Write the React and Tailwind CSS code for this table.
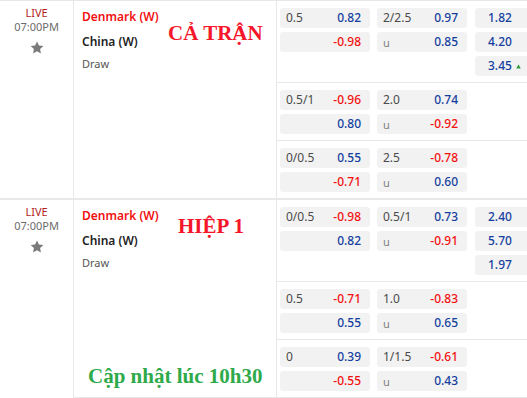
import React from "react";

const BLUE = "text-[#143f9e]";
const RED = "text-[#f21010]";

function Star() {
  return (
    <svg width="14" height="13" viewBox="0 0 24 23" className="mx-auto">
      <path d="M12 0.8l3.4 7.1 7.8 1-5.7 5.4 1.4 7.7L12 18.3l-6.9 3.7 1.4-7.7L0.8 8.9l7.8-1z" fill="#7a7a7a" />
    </svg>
  );
}

function Box({ label, value, color, small }) {
  return (
    <div className="h-[20px] rounded-[3px] bg-[#f2f2f2] flex items-center justify-between pl-[6px] pr-[9px] text-[12px] leading-none">
      <span className={small ? "text-[11px] text-[#808080]" : "text-[#4a4a4a]"}>{label}</span>
      {value !== undefined && <span className={"font-medium " + (color === "b" ? BLUE : RED)}>{value}</span>}
    </div>
  );
}

function Empty() {
  return <div className="h-[20px]" />;
}

function X12({ value, up }) {
  return (
    <div className="h-[20px] rounded-[3px] bg-[#f2f2f2] flex items-center pl-[13px] text-[12px] leading-none">
      <span className={"font-medium " + BLUE}>{value}</span>
      {up && (
        <svg width="5" height="5" viewBox="0 0 5 5" className="ml-[4px] mt-[1px]">
          <path d="M2.5 0.5L4.8 4.6H0.2z" fill="#2d9b3c" />
        </svg>
      )}
    </div>
  );
}

function Market({ a, b, c, last }) {
  return (
    <div className={"flex pl-[3px] pt-[7px] pb-[6px] " + (last ? "" : "border-b border-[#e8e8e8]")}>
      <div className="w-[90px] shrink-0 flex flex-col gap-[4px]">
        <Box {...a[0]} />
        {a[1] ? <Box {...a[1]} /> : <Empty />}
      </div>
      <div className="w-[90px] shrink-0 ml-[7px] flex flex-col gap-[4px]">
        <Box {...b[0]} />
        <Box {...b[1]} small />
      </div>
      {c && (
        <div className="w-[60px] shrink-0 ml-[8px] flex flex-col gap-[4px]">
          {c.map((x, i) => (
            <X12 key={i} value={x.v} up={x.up} />
          ))}
        </div>
      )}
    </div>
  );
}

function LeftCol() {
  return (
    <div className="w-[74px] shrink-0 border-r border-[#e8e8e8] pt-[5px] text-center text-[11px] leading-[14px]">
      <div className="text-[#b22222]">LIVE</div>
      <div className="text-[#6b6b6b]">07:00PM</div>
      <div className="mt-[7px]">
        <Star />
      </div>
    </div>
  );
}

function Teams({ children }) {
  return (
    <div className="relative w-[203px] shrink-0 border-r border-[#e8e8e8] pt-[8px] pl-[8px] leading-[16px]">
      <div className="text-[12px] font-semibold text-[#f21010]">Denmark (W)</div>
      <div className="mt-[9px] text-[12px] font-semibold text-[#222]">China (W)</div>
      <div className="mt-[6px] text-[11px] text-[#555]">Draw</div>
      {children}
    </div>
  );
}

const serif = "font-['Liberation_Serif','Times_New_Roman',serif] font-bold";

export default function App() {
  return (
    <div className="w-[527px] h-[398px] overflow-hidden bg-white font-['Noto_Sans','Open_Sans',sans-serif] border-t border-[#e8e8e8]">
      {/* Section 1 */}
      <div className="flex border-b-2 border-[#e8e8e8]">
        <LeftCol />
        <Teams>
          <div className={"absolute left-[94px] top-[20px] text-[21px] leading-[24px] text-[#f5162a] " + serif}>
            CẢ TRẬN
          </div>
        </Teams>
        <div className="flex-1 min-w-0 overflow-hidden">
          <Market
            a={[{ label: "0.5", value: "0.82", color: "b" }, { label: "", value: "-0.98", color: "r" }]}
            b={[{ label: "2/2.5", value: "0.97", color: "b" }, { label: "u", value: "0.85", color: "b" }]}
            c={[{ v: "1.82" }, { v: "4.20" }, { v: "3.45", up: true }]}
          />
          <Market
            a={[{ label: "0.5/1", value: "-0.96", color: "r" }, { label: "", value: "0.80", color: "b" }]}
            b={[{ label: "2.0", value: "0.74", color: "b" }, { label: "u", value: "-0.92", color: "r" }]}
          />
          <Market
            last
            a={[{ label: "0/0.5", value: "0.55", color: "b" }, { label: "", value: "-0.71", color: "r" }]}
            b={[{ label: "2.5", value: "-0.78", color: "r" }, { label: "u", value: "0.60", color: "b" }]}
          />
        </div>
      </div>
      {/* Section 2 */}
      <div className="flex">
        <LeftCol />
        <div className="flex flex-1 min-w-0 border-b border-[#e8e8e8]">
          <Teams>
            <div className={"absolute left-[104px] top-[14px] text-[21px] leading-[24px] text-[#f5162a] " + serif}>
              HIỆP 1
            </div>
            <div className={"absolute left-[14px] top-[164px] whitespace-nowrap text-[21px] leading-[24px] text-[#2eaa4a] " + serif}>
              Cập nhật lúc 10h30
            </div>
          </Teams>
          <div className="flex-1 min-w-0 overflow-hidden">
            <Market
              a={[{ label: "0/0.5", value: "-0.98", color: "r" }, { label: "", value: "0.82", color: "b" }]}
              b={[{ label: "0.5/1", value: "0.73", color: "b" }, { label: "u", value: "-0.91", color: "r" }]}
              c={[{ v: "2.40" }, { v: "5.70" }, { v: "1.97" }]}
            />
            <Market
              a={[{ label: "0.5", value: "-0.71", color: "r" }, { label: "", value: "0.55", color: "b" }]}
              b={[{ label: "1.0", value: "-0.83", color: "r" }, { label: "u", value: "0.65", color: "b" }]}
            />
            <Market
              last
              a={[{ label: "0", value: "0.39", color: "b" }, { label: "", value: "-0.55", color: "r" }]}
              b={[{ label: "1/1.5", value: "-0.61", color: "r" }, { label: "u", value: "0.43", color: "b" }]}
            />
          </div>
        </div>
      </div>
    </div>
  );
}
